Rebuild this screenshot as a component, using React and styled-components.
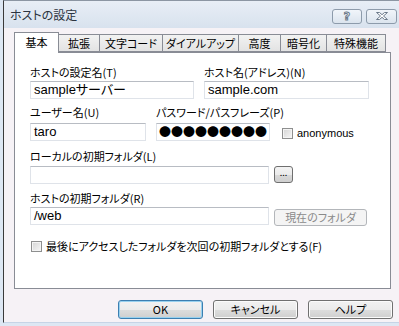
import React from 'react';
import styled, { createGlobalStyle } from 'styled-components';

const GlobalStyle = createGlobalStyle`
  html, body {
    margin: 0;
    padding: 0;
    background: #e4ecf6;
  }
  body {
    font-family: "Noto Sans CJK JP", sans-serif;
    font-size: 11px;
    font-feature-settings: "palt";
    color: #000;
  }
`;

const tabs = [
  { label: '基本', width: 45 },
  { label: '拡張', width: 42 },
  { label: '文字コード', width: 64 },
  { label: 'ダイアルアップ', width: 77 },
  { label: '高度', width: 43 },
  { label: '暗号化', width: 47 },
  { label: '特殊機能', width: 60 },
];

const CloseIcon = () => (
  <svg width="14" height="9" viewBox="0 0 14 9">
    <path
      d="M1.5 0.5h3l2.5 2.2 2.5-2.2h3l-4 3.5 4 3.5h-3L7 5.3 4.5 7.5h-3l4-3.5z"
      fill="#ffffff"
      stroke="#6c7a8b"
      strokeWidth="1"
    />
  </svg>
);

export default function App() {
  return (
    <>
      <GlobalStyle />
      <Frame>
        <Dialog>
          <TitleBar>
            <Title>ホストの設定</Title>
            <CaptionButton $width={30}>
              <HelpGlyph>?</HelpGlyph>
            </CaptionButton>
            <CaptionButton $width={31}>
              <CloseIcon />
            </CaptionButton>
          </TitleBar>

          <TabStrip>
            {tabs.map((t, i) => (
              <Tab key={t.label} $width={t.width} $active={i === 0}>
                {t.label}
              </Tab>
            ))}
          </TabStrip>

          <Panel>
            <Row $top={0}>
              <Field $width={164}>
                <Label>ホストの設定名(T)</Label>
                <TextBox $gap={2}>sampleサーバー</TextBox>
              </Field>
              <Field $width={165}>
                <Label>ホスト名(アドレス)(N)</Label>
                <TextBox $gap={2}>sample.com</TextBox>
              </Field>
            </Row>

            <Row $top={6}>
              <Field $width={116}>
                <Label>ユーザー名(U)</Label>
                <TextBox $gap={4}>taro</TextBox>
              </Field>
              <Field $width={114}>
                <Label>パスワード/パスフレーズ(P)</Label>
                <PasswordBox $gap={4}>●●●●●●●●●</PasswordBox>
              </Field>
              <CheckLine $inline>
                <Check />
                <Latin>anonymous</Latin>
              </CheckLine>
            </Row>

            <Row $top={8}>
              <Field $width={280}>
                <Label>ローカルの初期フォルダ(L)</Label>
                <Inline>
                  <TextBox $width={239} $gap={3} />
                  <SmallButton $width={19}>...</SmallButton>
                </Inline>
              </Field>
            </Row>

            <Row $top={7}>
              <Field $width={340}>
                <Label>ホストの初期フォルダ(R)</Label>
                <Inline>
                  <TextBox $width={239} $gap={2}>/web</TextBox>
                  <SmallButton $width={93} $disabled>現在のフォルダ</SmallButton>
                </Inline>
              </Field>
            </Row>

            <Row $top={12}>
              <CheckLine>
                <Check />
                <span>最後にアクセスしたフォルダを次回の初期フォルダとする(F)</span>
              </CheckLine>
            </Row>
          </Panel>

          <ButtonBar>
            <PushButton $default>OK</PushButton>
            <PushButton>キャンセル</PushButton>
            <PushButton>ヘルプ</PushButton>
          </ButtonBar>
        </Dialog>
      </Frame>
    </>
  );
}

const Frame = styled.div`
  width: 399px;
  height: 326px;
  box-sizing: border-box;
  padding: 0 0 3px 3px;
  background: #dde7f3;
`;

const Dialog = styled.div`
  height: 100%;
  box-sizing: border-box;
  display: flex;
  flex-direction: column;
  border-left: 1px solid #3a3a3a;
  border-top: 1px solid #8c96a3;
  border-bottom: 1px solid #c6d4e6;
  background: #f6f2f6;
`;

// タイトルバー
const TitleBar = styled.div`
  height: 27px;
  display: flex;
  align-items: flex-start;
  gap: 4px;
  padding: 0 2px 0 6px;
  background: linear-gradient(to bottom, #e8eef6, #d8e2ee);
`;

const Title = styled.div`
  flex-grow: 1;
  font-size: 12px;
  line-height: 14px;
  color: #2b3440;
  margin-top: 7px;
`;

const CaptionButton = styled.div`
  width: ${p => p.$width}px;
  height: 15px;
  margin-top: 8px;
  box-sizing: border-box;
  border: 1px solid #8d9bab;
  border-radius: 3px;
  background: linear-gradient(to bottom, #f1f5fa, #dbe4ee);
  display: flex;
  align-items: center;
  justify-content: center;
`;

const HelpGlyph = styled.span`
  font-family: "DejaVu Sans", sans-serif;
  font-size: 11px;
  font-weight: bold;
  line-height: 13px;
  color: #ffffff;
  -webkit-text-stroke: 1px #6c7a8b;
`;

const TabStrip = styled.div`
  display: flex;
  align-items: flex-end;
  height: 20px;
  margin: 4px 0 0 10px;
  position: relative;
  z-index: 1;
`;

const Tab = styled.div`
  width: ${p => p.$width}px;
  height: ${p => (p.$active ? 21 : 18)}px;
  box-sizing: border-box;
  margin-left: -1px;
  border: 1px solid #898c95;
  border-bottom: ${p => (p.$active ? 'none' : '1px solid #898c95')};
  background: ${p =>
    p.$active ? '#ffffff' : 'linear-gradient(to bottom, #f2f2f2, #e3e3e3)'};
  text-align: center;
  font-size: 11px;
  white-space: nowrap;
  line-height: ${p => (p.$active ? 18 : 16)}px;
  margin-bottom: ${p => (p.$active ? -1 : 0)}px;

  &:first-child {
    margin-left: 0;
  }
`;

const Panel = styled.div`
  height: 237px;
  margin: 0 8px 0 10px;
  box-sizing: border-box;
  border: 1px solid #898c95;
  background: #ffffff;
  padding: 12px 0 0 15px;
  display: flex;
  flex-direction: column;
`;

const Row = styled.div`
  display: flex;
  align-items: flex-end;
  gap: 10px;
  margin-top: ${p => p.$top}px;
`;

const Field = styled.div`
  width: ${p => p.$width}px;
  display: flex;
  flex-direction: column;
`;

const Label = styled.div`
  font-size: 11px;
  line-height: 14px;
  height: 14px;
  white-space: nowrap;
`;

const Inline = styled.div`
  display: flex;
  align-items: flex-start;
  gap: 5px;
`;

const TextBox = styled.div`
  width: ${p => (p.$width ? `${p.$width}px` : '100%')};
  height: 18px;
  margin-top: ${p => p.$gap}px;
  box-sizing: border-box;
  border: 1px solid #dfe3e9;
  border-top-color: #b8bcc3;
  padding-left: 3px;
  font-family: "Liberation Sans", "Noto Sans CJK JP", sans-serif;
  font-size: 13px;
  line-height: 16px;
  background: #ffffff;
  white-space: nowrap;
  overflow: hidden;
`;

const PasswordBox = styled(TextBox)`
  font-family: "Noto Sans CJK JP", sans-serif;
  font-size: 12px;
  font-feature-settings: normal;
  letter-spacing: 0;
  padding-left: 2px;
`;

const SmallButton = styled.div`
  width: ${p => p.$width}px;
  height: 17px;
  margin-top: ${p => (p.$disabled ? 4 : 3)}px;
  box-sizing: border-box;
  border: 1px solid ${p => (p.$disabled ? '#b3b6ba' : '#6f6f6f')};
  border-radius: 3px;
  background: ${p =>
    p.$disabled
      ? '#f4f4f4'
      : 'linear-gradient(to bottom, #f3f3f3 0%, #ebebeb 50%, #d9d9d9 51%, #cfcfcf 100%)'};
  color: ${p => (p.$disabled ? '#8a8a8a' : '#000')};
  font-size: ${p => (p.$disabled ? 11 : 9)}px;
  line-height: ${p => (p.$disabled ? 15 : 12)}px;
  text-align: center;
  white-space: nowrap;
`;

const CheckLine = styled.div`
  display: flex;
  align-items: center;
  gap: 4px;
  margin: ${p => (p.$inline ? '0 0 2px 2px' : '0 0 0 1px')};
  white-space: nowrap;
`;

// チェックボックス
const Check = styled.span`
  width: 11px;
  height: 11px;
  box-sizing: border-box;
  border: 1px solid #8e8f8f;
  background: linear-gradient(135deg, #d4d4d4, #f7f7f7);
  box-shadow: inset 0 0 0 1px #f4f4f4;
`;

const Latin = styled.span`
  font-family: "Liberation Sans", sans-serif;
  font-size: 11px;
`;

const ButtonBar = styled.div`
  display: flex;
  justify-content: flex-end;
  gap: 10px;
  margin: 11px 6px 0 0;
`;

const PushButton = styled.div`
  width: 85px;
  height: 19px;
  box-sizing: border-box;
  border: 1px solid ${p => (p.$default ? '#3c7fb1' : '#707070')};
  border-radius: 3px;
  background: linear-gradient(to bottom, #f2f2f2 0%, #ebebeb 50%, #dddddd 51%, #cfcfcf 100%);
  box-shadow: ${p => (p.$default ? 'inset 0 0 0 1px #98d1ef' : 'inset 0 0 0 1px #fbfbfb')};
  font-size: 11px;
  line-height: 17px;
  text-align: center;
`;
